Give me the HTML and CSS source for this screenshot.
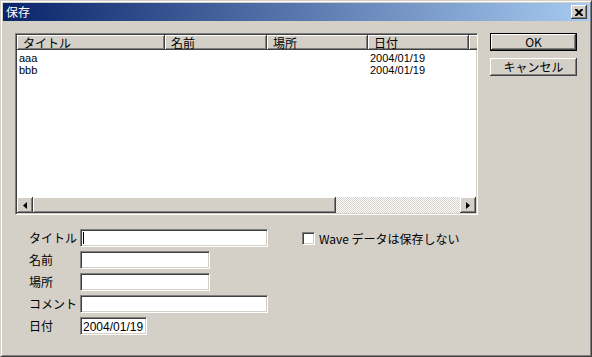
FILE: index.html
```html
<!DOCTYPE html>
<html lang="ja">
<head>
    <meta charset="UTF-8">
    <title>保存</title>
    <link rel="stylesheet" href="styles.css">
</head>
<body>
    <div class="window">
        <div class="titlebar">
            <span class="title">保存</span>
            <button class="close-btn">
                <svg width="8" height="7" viewBox="0 0 8 7"><path d="M0 0h2l2 2 2-2h2v1L5.5 3.5 8 6v1H6L4 5 2 7H0V6l2.5-2.5L0 1z" fill="#000"/></svg>
            </button>
        </div>

        <div class="content">
            <div class="top-row">
                <!-- List view -->
                <div class="listview">
                    <div class="lv-header">
                        <div class="lv-col col-title">タイトル</div>
                        <div class="lv-col col-name">名前</div>
                        <div class="lv-col col-place">場所</div>
                        <div class="lv-col col-date">日付</div>
                        <div class="lv-col col-more">コ</div>
                    </div>
                    <div class="lv-body">
                        <div class="lv-row">
                            <span class="cell col-title">aaa</span>
                            <span class="cell col-name"></span>
                            <span class="cell col-place"></span>
                            <span class="cell col-date">2004/01/19</span>
                        </div>
                        <div class="lv-row">
                            <span class="cell col-title">bbb</span>
                            <span class="cell col-name"></span>
                            <span class="cell col-place"></span>
                            <span class="cell col-date">2004/01/19</span>
                        </div>
                    </div>
                    <div class="hscroll">
                        <div class="sb-btn">
                            <svg width="4" height="7" viewBox="0 0 4 7"><path d="M4 0v7L0 3.5z" fill="#000"/></svg>
                        </div>
                        <div class="sb-thumb"></div>
                        <div class="sb-track"></div>
                        <div class="sb-btn">
                            <svg width="4" height="7" viewBox="0 0 4 7"><path d="M0 0v7l4-3.5z" fill="#000"/></svg>
                        </div>
                    </div>
                </div>

                <div class="buttons">
                    <button class="btn default">OK</button>
                    <button class="btn">キャンセル</button>
                </div>
            </div>

            <div class="form">
                <div class="fields">
                    <label class="lbl">タイトル</label>
                    <div class="field wide focused"><span class="caret"></span></div>
                    <label class="lbl">名前</label>
                    <div class="field mid"></div>
                    <label class="lbl">場所</label>
                    <div class="field mid"></div>
                    <label class="lbl">コメント</label>
                    <div class="field wide"></div>
                    <label class="lbl">日付</label>
                    <div class="field short">2004/01/19</div>
                </div>
                <div class="check">
                    <span class="checkbox"></span>
                    <span>Wave データは保存しない</span>
                </div>
            </div>
        </div>
    </div>
</body>
</html>
```

FILE: styles.css
```css
body {
    margin: 0;
    background-color: #d4d0c8;
    font-family: "Noto Sans CJK JP", "Liberation Sans", sans-serif;
    font-size: 12px;
    line-height: 12px;
    color: #000;
}

.window {
    width: 592px;
    height: 357px;
    box-sizing: border-box;
    border-top: 1px solid #d4d0c8;
    border-left: 1px solid #d4d0c8;
    border-right: 1px solid #404040;
    border-bottom: 1px solid #404040;
    box-shadow: inset 1px 1px #fff, inset -1px -1px #808080;
    padding: 2px;
    display: flex;
    flex-direction: column;
}

.titlebar {
    height: 18px;
    background: linear-gradient(to right, #0a246a, #a6caf0);
    display: flex;
    align-items: center;
    justify-content: space-between;
    padding: 0 2px 0 3px;
}

.title {
    color: #fff;
    font-size: 12px;
}

.close-btn {
    width: 16px;
    height: 14px;
    padding: 0;
    background-color: #d4d0c8;
    border: none;
    box-shadow: inset -1px -1px #404040, inset 1px 1px #fff, inset -2px -2px #808080;
    display: flex;
    align-items: center;
    justify-content: center;
}

.content {
    padding: 12px 0 0 12px;
}

.top-row {
    display: flex;
    gap: 12px;
}

/* list view */
.listview {
    width: 463px;
    height: 182px;
    box-sizing: border-box;
    border-top: 1px solid #808080;
    border-left: 1px solid #808080;
    border-right: 1px solid #fff;
    border-bottom: 1px solid #fff;
    box-shadow: inset 1px 1px #404040, inset -1px -1px #d4d0c8;
    padding: 1px;
    background-color: #fff;
    display: flex;
    flex-direction: column;
    overflow: hidden;
}

.lv-header {
    display: flex;
    height: 15px;
    flex-shrink: 0;
}

.lv-col {
    height: 15px;
    box-sizing: border-box;
    background-color: #d4d0c8;
    box-shadow: inset -1px -1px #404040, inset 1px 1px #fff, inset -2px -2px #808080;
    padding: 2px 0 0 6px;
    white-space: nowrap;
    overflow: hidden;
    flex-shrink: 0;
}

.col-title { width: 148px; }
.col-name { width: 102px; }
.col-place { width: 101px; }
.col-date { width: 101px; }
.col-more { width: 20px; }

.lv-body {
    flex: 1;
    padding-top: 2px;
}

.lv-row {
    display: flex;
    height: 12px;
}

.cell {
    padding-left: 2px;
    box-sizing: border-box;
    flex-shrink: 0;
    font-family: "Liberation Sans", sans-serif;
    font-size: 11px;
    line-height: 12px;
}

.hscroll {
    height: 16px;
    display: flex;
    flex-shrink: 0;
}

.sb-btn {
    width: 16px;
    height: 16px;
    box-sizing: border-box;
    background-color: #d4d0c8;
    box-shadow: inset -1px -1px #404040, inset 1px 1px #fff, inset -2px -2px #808080;
    display: flex;
    align-items: center;
    justify-content: center;
    flex-shrink: 0;
}

.sb-thumb {
    width: 303px;
    background-color: #d4d0c8;
    box-shadow: inset -1px -1px #404040, inset 1px 1px #fff, inset -2px -2px #808080;
    flex-shrink: 0;
}

.sb-track {
    flex: 1;
    background-color: #e8e6e2;
    background-image: repeating-conic-gradient(#d4d0c8 0 25%, #fff 0 50%);
    background-size: 2px 2px;
}

/* buttons */
.buttons {
    display: flex;
    flex-direction: column;
    gap: 7px;
}

.btn {
    width: 87px;
    height: 18px;
    padding: 0;
    font-family: "Noto Sans CJK JP", "Liberation Sans", sans-serif;
    font-size: 12px;
    line-height: 12px;
    background-color: #d4d0c8;
    border: none;
    box-shadow: inset -1px -1px #404040, inset 1px 1px #fff, inset -2px -2px #808080;
}

.btn.default {
    border: 1px solid #000;
    box-shadow: inset -1px -1px #404040, inset 1px 1px #fff, inset -2px -2px #808080;
}

/* form */
.form {
    display: flex;
    padding: 14px 0 0 14px;
}

.fields {
    display: grid;
    grid-template-columns: 51px auto;
    row-gap: 4px;
    align-items: center;
    width: 265px;
}

.lbl {
    white-space: nowrap;
}

.field {
    height: 18px;
    box-sizing: border-box;
    background-color: #fff;
    border-top: 1px solid #808080;
    border-left: 1px solid #808080;
    border-right: 1px solid #fff;
    border-bottom: 1px solid #fff;
    box-shadow: inset 1px 1px #404040, inset -1px -1px #d4d0c8;
    padding: 3px 0 0 2px;
    font-family: "Liberation Sans", sans-serif;
    font-size: 12px;
}

.wide { width: 188px; }
.mid { width: 130px; }
.short { width: 67px; }

.caret {
    display: block;
    width: 1px;
    height: 12px;
    background-color: #000;
    margin-top: -1px;
}

.check {
    display: flex;
    align-items: center;
    gap: 4px;
    height: 13px;
    margin-top: 3px;
    margin-left: 8px;
}

.checkbox {
    width: 13px;
    height: 13px;
    box-sizing: border-box;
    background-color: #fff;
    border-top: 1px solid #808080;
    border-left: 1px solid #808080;
    border-right: 1px solid #fff;
    border-bottom: 1px solid #fff;
    box-shadow: inset 1px 1px #404040, inset -1px -1px #d4d0c8;
}
```
